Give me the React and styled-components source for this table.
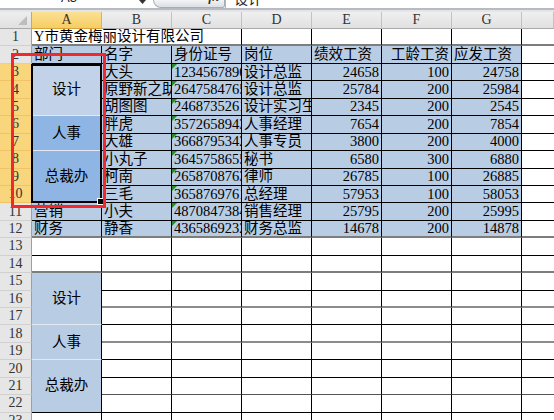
import React from 'react';
import styled, { createGlobalStyle, css } from 'styled-components';

const GlobalStyle = createGlobalStyle`
    html, body {
        margin: 0;
        padding: 0;
        background: #fff;
    }
    body {
        font-family: "Liberation Serif", "Noto Sans CJK SC", serif;
    }
`;

const FILL = '#b8cce4';
const TINT = '#8fb5e4';
const ACTIVE = '#c1d2e9';
const BLACK = '1px solid #000';
const SOFT = '1px solid #e2e9f3';

const Screen = styled.div`
    position: relative;
    width: 554px;
    height: 420px;
    overflow: hidden;
    background: #fff;
`;

const FormulaBar = styled.div`
    display: flex;
    height: 8px;
    border-bottom: 2px solid #b7bbc1;
    overflow: hidden;
    font-size: 14px;
    line-height: 14px;
`;

const NameBox = styled.div`
    width: 138px;
    display: flex;
    align-items: flex-end;
    justify-content: center;
    padding-bottom: 3px;
    font-family: "Liberation Sans", sans-serif;
    font-size: 13px;
    color: #222;
`;

const DropBox = styled.div`
    width: 14px;
    display: flex;
    align-items: flex-start;
    padding-left: 1px;
`;

const FxCapsule = styled.div`
    width: 72px;
    display: flex;
    align-items: flex-end;
    justify-content: flex-end;
    padding: 0 5px 3px 0;
    box-sizing: border-box;
    background: linear-gradient(#f3f4f6, #dcdfe3);
    border: 1px solid #a9adb3;
    border-top: none;
    border-radius: 0 0 4px 12px;
    font-family: "Liberation Serif", serif;
    font-style: italic;
    font-weight: bold;
    font-size: 13px;
    color: #333;
`;

const FormulaInput = styled.div`
    flex: 1;
    display: flex;
    align-items: flex-end;
    padding: 0 0 3px 8px;
    border-left: 1px solid #b4b8be;
    font-family: "Noto Sans CJK SC", sans-serif;
    font-size: 14px;
    color: #222;
`;

const Band = styled.div`
    height: 2px;
    background: #e3e5e8;
`;

const Sheet = styled.div`
    display: grid;
    grid-template-columns: 32px repeat(7, 70px) 1fr;
    grid-template-rows: 17px repeat(23, 17.45px);
`;

const place = css`
    grid-column: ${p => p.$col} / span ${p => p.$cs || 1};
    grid-row: ${p => p.$row} / span ${p => p.$rs || 1};
`;

const Corner = styled.div`
    ${place};
    display: flex;
    align-items: flex-end;
    justify-content: flex-end;
    padding: 0 4px 3px 0;
    box-sizing: border-box;
    background: linear-gradient(#eeeeee, #e0e0e0);
    border-right: 1px solid #a9a9a9;
    border-bottom: 1px solid #a9a9a9;
`;

const ColHead = styled.div`
    ${place};
    display: flex;
    align-items: center;
    justify-content: center;
    box-sizing: border-box;
    background: ${p => p.$active
        ? 'linear-gradient(#fbe194, #f6cd62)'
        : 'linear-gradient(#efefef, #e1e1e1)'};
    border-right: 1px solid ${p => (p.$active ? '#e2b24e' : '#c2c2c2')};
    border-bottom: 1px solid ${p => (p.$active ? '#d9a23a' : '#a9a9a9')};
    font-size: 14px;
    color: #333;
`;

const RowHead = styled.div`
    ${place};
    display: flex;
    align-items: center;
    justify-content: center;
    box-sizing: border-box;
    background: ${p => (p.$active ? '#f9d57c' : '#e6e6e6')};
    border-right: 1px solid ${p => (p.$active ? '#e0ab44' : '#9f9f9f')};
    border-bottom: 1px solid ${p => (p.$active ? '#efc469' : '#d0d0d0')};
    font-size: 14px;
    color: #333;
`;

const Cell = styled.div`
    ${place};
    position: relative;
    display: flex;
    align-items: center;
    justify-content: ${p =>
        p.$align === 'center' ? 'center' : p.$align === 'right' ? 'flex-end' : 'flex-start'};
    padding: 0 2px;
    box-sizing: border-box;
    background: ${p => p.$fill || '#fff'};
    border-right: ${p => p.$right || 'none'};
    border-bottom: ${p => p.$bottom || 'none'};
    overflow: hidden;
    white-space: nowrap;
    font-size: 14.5px;
    line-height: 17px;
    color: #000;

    ${p => p.$flag && css`
        &::before {
            content: '';
            position: absolute;
            left: 0;
            top: 0;
            border-top: 5px solid #1f8f2a;
            border-right: 5px solid transparent;
        }
    `}
`;

const Selection = styled.div`
    ${place};
    position: relative;
    z-index: 2;
    margin-left: -1px;
    border: 2px solid #000;
    pointer-events: none;
`;

const Handle = styled.div`
    position: absolute;
    right: -4px;
    bottom: -4px;
    width: 5px;
    height: 5px;
    background: #000;
    border: 1px solid #fff;
`;

const Annotation = styled.div`
    position: absolute;
    left: 11px;
    top: 53px;
    width: 95px;
    height: 155px;
    box-sizing: border-box;
    border: 3px solid #f2282c;
    z-index: 3;
    pointer-events: none;
`;

const lineBelow = r => {
    if (r === 1 || r === 12 || r === 14) return '2px solid #7d7d7d';
    if (r === 16 || r === 18) return '2px solid #8c8c8c';
    if (r === 21) return '1px solid #555';
    return BLACK;
};

const staff = [
    ['大头', '123456789012345678', '设计总监', 24658, 100, 24758],
    ['原野新之助', '264758476512345678', '设计总监', 25784, 200, 25984],
    ['胡图图', '246873526112345678', '设计实习生', 2345, 200, 2545],
    ['胖虎', '357265894312345678', '人事经理', 7654, 200, 7854],
    ['大雄', '366879534212345678', '人事专员', 3800, 200, 4000],
    ['小丸子', '364575865512345678', '秘书', 6580, 300, 6880],
    ['柯南', '265870876312345678', '律师', 26785, 100, 26885],
    ['三毛', '365876976112345678', '总经理', 57953, 100, 58053],
    ['小夫', '487084738412345678', '销售经理', 25795, 200, 25995],
    ['静香', '436586923212345678', '财务总监', 14678, 200, 14878],
];

const headings = ['部门', '名字', '身份证号', '岗位', '绩效工资', '工龄工资', '应发工资'];

const topDepts = [
    { label: '设计', from: 3, span: 3, fill: ACTIVE, bottom: SOFT },
    { label: '人事', from: 6, span: 2, fill: TINT, bottom: SOFT },
    { label: '总裁办', from: 8, span: 3, fill: TINT, bottom: BLACK },
];

const lowDepts = [
    { label: '设计', from: 15, span: 3, bottom: SOFT },
    { label: '人事', from: 18, span: 2, bottom: SOFT },
    { label: '总裁办', from: 20, span: 3, bottom: BLACK },
];

export default function App() {
    const cells = [];
    const g = r => r + 1;

    // column headers
    ['A', 'B', 'C', 'D', 'E', 'F', 'G', ''].forEach((c, i) => {
        cells.push(
            <ColHead key={`h${i}`} $col={i + 2} $row={1} $active={c === 'A'}>
                {c}
            </ColHead>
        );
    });

    // row headers
    for (let r = 1; r <= 23; r++) {
        cells.push(
            <RowHead key={`r${r}`} $col={1} $row={g(r)} $active={r >= 3 && r <= 10}>
                {r}
            </RowHead>
        );
    }

    // row 1: title
    cells.push(
        <Cell key="title" $col={2} $cs={3} $row={g(1)} $right={BLACK} $bottom={lineBelow(1)}>
            Y市黄金梅丽设计有限公司
        </Cell>
    );
    for (let c = 5; c <= 9; c++) {
        cells.push(
            <Cell key={`t${c}`} $col={c} $row={g(1)} $right={c < 9 ? BLACK : 'none'} $bottom={lineBelow(1)} />
        );
    }

    // row 2: headings
    headings.forEach((h, i) => {
        cells.push(
            <Cell
                key={`hd${i}`}
                $col={i + 2}
                $row={g(2)}
                $fill={FILL}
                $right={BLACK}
                $bottom={BLACK}
                $align={i === 5 ? 'right' : 'left'}
            >
                {h}
            </Cell>
        );
    });
    cells.push(<Cell key="hd-h" $col={9} $row={g(2)} $bottom={BLACK} />);

    // department column, upper table
    topDepts.forEach(d => {
        cells.push(
            <Cell
                key={`td${d.from}`}
                $col={2}
                $row={g(d.from)}
                $rs={d.span}
                $fill={d.fill}
                $right={BLACK}
                $bottom={d.bottom}
                $align="center"
            >
                {d.label}
            </Cell>
        );
    });
    [['营销', 11], ['财务', 12]].forEach(([label, r]) => {
        cells.push(
            <Cell key={`dp${r}`} $col={2} $row={g(r)} $fill={FILL} $right={BLACK} $bottom={lineBelow(r)}>
                {label}
            </Cell>
        );
    });

    // staff rows
    staff.forEach((row, i) => {
        const r = i + 3;
        row.forEach((v, j) => {
            cells.push(
                <Cell
                    key={`s${r}-${j}`}
                    $col={j + 3}
                    $row={g(r)}
                    $fill={FILL}
                    $right={BLACK}
                    $bottom={lineBelow(r)}
                    $align={typeof v === 'number' ? 'right' : 'left'}
                    $flag={j === 1}
                >
                    {v}
                </Cell>
            );
        });
        cells.push(<Cell key={`sh${r}`} $col={9} $row={g(r)} $bottom={lineBelow(r)} />);
    });

    // lower blank area
    for (let r = 13; r <= 23; r++) {
        if (r === 13 || r === 14 || r === 23) {
            cells.push(<Cell key={`la${r}`} $col={2} $row={g(r)} $right={BLACK} $bottom={lineBelow(r)} />);
        }
        for (let c = 3; c <= 9; c++) {
            cells.push(
                <Cell key={`l${r}-${c}`} $col={c} $row={g(r)} $right={c < 9 ? BLACK : 'none'} $bottom={lineBelow(r)} />
            );
        }
    }
    lowDepts.forEach(d => {
        cells.push(
            <Cell
                key={`ld${d.from}`}
                $col={2}
                $row={g(d.from)}
                $rs={d.span}
                $fill={FILL}
                $right={BLACK}
                $bottom={d.bottom}
                $align="center"
            >
                {d.label}
            </Cell>
        );
    });

    return (
        <Screen>
            <GlobalStyle />
            <FormulaBar>
                <NameBox>A3</NameBox>
                <DropBox>
                    <svg width="7" height="4" viewBox="0 0 7 4">
                        <polygon points="0,0 7,0 3.5,4" fill="#333" />
                    </svg>
                </DropBox>
                <FxCapsule>fx</FxCapsule>
                <FormulaInput>设计</FormulaInput>
            </FormulaBar>
            <Band />
            <Sheet>
                <Corner $col={1} $row={1}>
                    <svg width="9" height="9" viewBox="0 0 9 9">
                        <polygon points="9,0 9,9 0,9" fill="#bdbdbd" />
                    </svg>
                </Corner>
                {cells}
                <Selection $col={2} $row={4} $rs={8}>
                    <Handle />
                </Selection>
            </Sheet>
            <Annotation />
        </Screen>
    );
}
